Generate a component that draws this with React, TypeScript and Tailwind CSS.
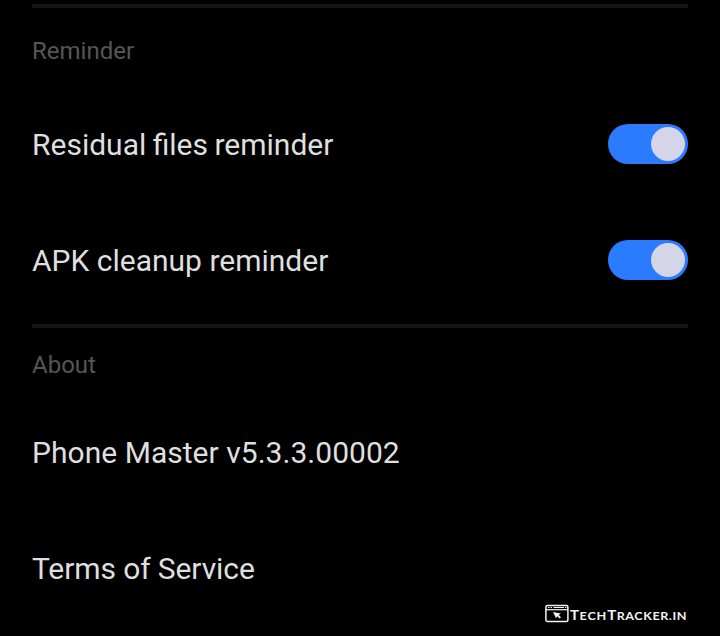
function Toggle() {
  return (
    <span role="switch" aria-checked="true" className="flex h-10 w-20 items-center justify-end rounded-full bg-[#2b7bfe] pr-[3px]">
      <span className="size-[34px] rounded-full bg-[#d5d5e9]" />
    </span>
  );
}

function Row({ label, toggle = false, tracking = "" }: { label: string; toggle?: boolean; tracking?: string }) {
  return (
    <div className="flex h-[116px] shrink-0 items-center justify-between">
      <span className={`pt-0.5 text-[30px] leading-9 whitespace-nowrap text-[#dfdfdf] ${tracking}`}>{label}</span>
      {toggle && <Toggle />}
    </div>
  );
}

function Watermark() {
  return (
    <div className="absolute top-[604px] left-[545px] flex text-[#f2f2f2]">
      <svg width="25" height="19" viewBox="0 0 25 19" fill="none" stroke="currentColor">
        <rect x="0.9" y="1.4" width="22" height="16" rx="1.5" strokeWidth="1.5" />
        <path d="M1 5.7H23" strokeWidth="1.2" />
        <path d="M3 3.5H4.5M5.5 3.5H7M8.5 3.5H19M20 3.5H21.5" strokeWidth="1.1" />
        <path d="M8 8L15.8 9.6L13.8 11L16 13.5L14.5 14.5L12.3 12.3L11 14.2Z" fill="currentColor" stroke="none" />
      </svg>
      <span className="mt-1 origin-left scale-x-[1.2] font-['Lato',sans-serif] text-[12.5px] leading-4 font-bold tracking-[0.45px] whitespace-nowrap">
        T<span className="text-[10.5px] tracking-[0.7px]">ECH</span>T<span className="text-[10.5px]">RACKER.IN</span>
      </span>
    </div>
  );
}

export default function App() {
  return (
    <main className="relative flex h-[636px] w-[720px] flex-col overflow-hidden bg-black px-8 pt-1 font-['Roboto',sans-serif]">
      <div className="h-1 shrink-0 bg-[#141414]" />
      <h2 className="mt-7 h-[50px] shrink-0 text-[24px] leading-[30px] text-[#565656]">Reminder</h2>
      <Row label="Residual files reminder" toggle tracking="[word-spacing:-1px]" />
      <Row label="APK cleanup reminder" toggle />
      <div className="mt-[6px] h-1 shrink-0 bg-[#141414]" />
      <h2 className="mt-[22px] h-[44px] shrink-0 text-[24px] leading-[30px] text-[#565656]">About</h2>
      <Row label="Phone Master v5.3.3.00002" tracking="tracking-[0.03px]" />
      <Row label="Terms of Service" tracking="tracking-[-0.1px]" />
      <Watermark />
    </main>
  );
}
